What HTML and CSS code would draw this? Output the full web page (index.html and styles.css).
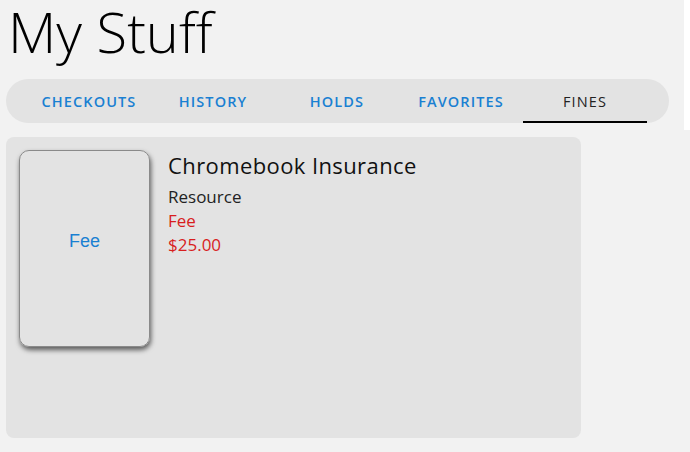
FILE: index.html
```html
<!DOCTYPE html>
<html lang="en">
<head>
    <meta charset="UTF-8">
    <meta name="viewport" content="width=device-width, initial-scale=1.0">
    <title>My Stuff</title>
    <link rel="stylesheet" href="styles.css">
</head>
<body>
    <div class="header">
        <h1>My Stuff</h1>
        <nav class="tabs">
            <a class="tab">Checkouts</a>
            <a class="tab">History</a>
            <a class="tab">Holds</a>
            <a class="tab">Favorites</a>
            <a class="tab active">Fines</a>
        </nav>
    </div>

    <div class="content">
        <div class="card">
            <div class="thumb">Fee</div>
            <div class="details">
                <div class="title">Chromebook Insurance</div>
                <div class="line">Resource</div>
                <div class="line fine">Fee</div>
                <div class="line fine">$25.00</div>
            </div>
        </div>
    </div>
</body>
</html>
```

FILE: styles.css
```css
body {
    margin: 0;
    background: #fff;
    font-family: "Open Sans", sans-serif;
    color: #111;
}
.header {
    width: 684px;
    height: 130px;
    background: #f2f2f2;
    padding: 2px 0 0 6px;
    box-sizing: border-box;
}
h1 {
    margin: 0;
    padding: 0 0 0 2px;
    font-size: 56px;
    font-weight: 300;
    line-height: 58px;
    color: #000;
}
.tabs {
    display: flex;
    width: 663px;
    height: 44px;
    margin-top: 19px;
    padding: 0 22px 0 21px;
    box-sizing: border-box;
    background: #e3e3e3;
    border-radius: 22px;
}
.tab {
    width: 124px;
    display: flex;
    align-items: center;
    justify-content: center;
    font-size: 14.5px;
    font-weight: 600;
    letter-spacing: 1.1px;
    text-transform: uppercase;
    color: #1a80d2;
    cursor: pointer;
}
.tab.active {
    color: #222;
    font-weight: 500;
    border-bottom: 2px solid #000;
    padding-top: 2px;
    box-sizing: border-box;
}
.content {
    background: #f2f2f2;
    height: 322px;
    padding: 7px 0 0 6px;
    box-sizing: border-box;
}
.card {
    width: 575px;
    height: 301px;
    background: #e3e3e3;
    border-radius: 8px;
    padding: 13px;
    box-sizing: border-box;
    display: flex;
    gap: 18px;
}
.thumb {
    width: 131px;
    height: 197px;
    flex-shrink: 0;
    box-sizing: border-box;
    padding-bottom: 14px;
    border: 1px solid #8a8a8a;
    border-radius: 10px;
    box-shadow: 1px 3px 5px rgba(0, 0, 0, 0.6);
    display: flex;
    align-items: center;
    justify-content: center;
    font-family: "Liberation Sans", Arial, sans-serif;
    font-size: 18px;
    color: #1a80d2;
}
.title {
    font-size: 22px;
    line-height: 30px;
    letter-spacing: 0.4px;
    color: #111;
    margin-bottom: 5px;
}
.line {
    font-size: 17px;
    line-height: 24px;
    color: #222;
}
.fine {
    color: #d81e1e;
}
```
